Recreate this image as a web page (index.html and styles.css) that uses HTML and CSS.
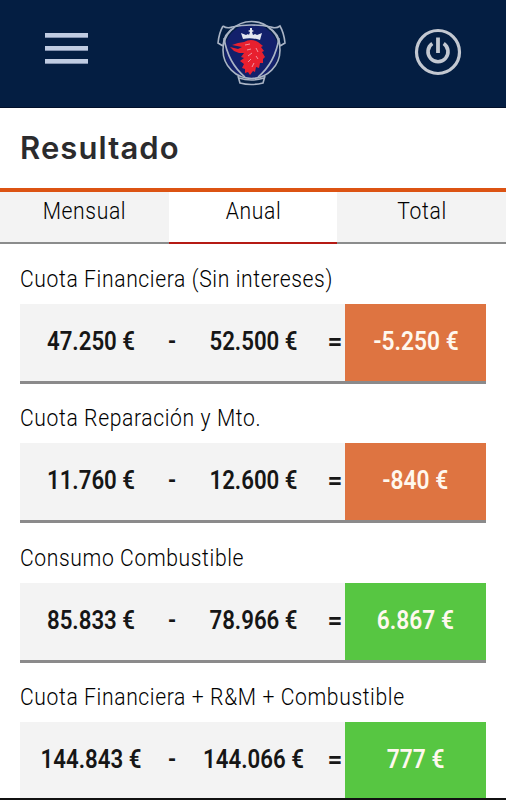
FILE: index.html
```html
<!DOCTYPE html>
<html lang="es">
<head>
    <meta charset="UTF-8">
    <meta name="viewport" content="width=device-width, initial-scale=1.0">
    <title>Resultado</title>
    <link rel="stylesheet" href="styles.css">
</head>
<body>

    <header>
        <button class="menu" aria-label="Menú">
            <span></span>
            <span></span>
            <span></span>
        </button>

        <svg class="logo" viewBox="0 0 70 68" width="70" height="68">
            <circle cx="34.500" cy="32" r="27" fill="#13206b"/>
            <g fill="none" stroke="#aab4c5" stroke-width="1.6">
                <circle cx="34.500" cy="31" r="28.500"/>
                <path d="M6 7 Q10 10 15 8 Q34 4 54 8 Q59 10 63 7 Q67 14 68 24 L63 27 M6 7 Q2 14 1 24 L6 27"/>
                <path d="M6 27 Q7 14 17 9 M63 27 Q62 14 52 9"/>
                <path d="M7 19 Q11 44 28 58 M62 19 Q58 44 41 58"/>
                <path d="M21 57 L23 64 Q34 67 46 64 L48 57 M22 59 Q34 63 47 59"/>
            </g>
            <path fill="#e4e7f0" d="M26 20 L24 14 L29 16 L31 15 L32 16 L33 13 L31 12 L33 11 L33 9 L35 9 L35 11 L37 12 L35 13 L36 16 L38 15 L40 16 L45 14 L43 21 Q34 18 26 20 Z"/>
            <path fill="#e8202f" d="M27 23 Q34 19 41 23 L46 27 L44 28 L47 32 L45 33 L48 38 L46 40 L46 44 L43 44 L42 49 L39 48 L38 53 L36 52 L33 56 L31 53 L28 54 L28 50 L25 49 L27 45 L23 42 L27 39 L24 38 L27 34 L22 34 L17 32 L13 28 L21 30 L25 28 L15 26 L21 24 Z"/>
            <path fill="none" stroke="#f0b5c0" stroke-width="0.800" d="M28 26 L33 25 M30 31 L34 30 M31 37 L35 34 M39 29 L41 33 M31 43 L34 40 M39 37 L41 40 M35 48 L37 44"/>
        </svg>

        <svg class="power" viewBox="0 0 48 48" width="48" height="48">
            <g fill="none" stroke="#c3c8d1">
                <circle cx="24" cy="24" r="21.500" stroke-width="3.200"/>
                <path stroke-width="3.600" d="M18.300 15.500 A10 10 0 1 0 29.700 15.500"/>
                <path stroke-width="3.800" d="M24 9.500 V25"/>
            </g>
        </svg>
    </header>

    <h1>Resultado</h1>

    <nav class="tabs">
        <a><span class="text">Mensual</span></a>
        <a class="active"><span class="text">Anual</span></a>
        <a><span class="text">Total</span></a>
    </nav>

    <main>
        <section>
            <h2><span class="text">Cuota Financiera (Sin intereses)</span></h2>
            <div class="row">
                <span>47.250 €</span><span>-</span><span>52.500 €</span><span class="equals">=</span>
                <div class="result negative"><span>-5.250 €</span></div>
            </div>
        </section>
        <section>
            <h2><span class="text">Cuota Reparación y Mto.</span></h2>
            <div class="row">
                <span>11.760 €</span><span>-</span><span>12.600 €</span><span class="equals">=</span>
                <div class="result negative"><span>-840 €</span></div>
            </div>
        </section>
        <section>
            <h2><span class="text">Consumo Combustible</span></h2>
            <div class="row">
                <span>85.833 €</span><span>-</span><span>78.966 €</span><span class="equals">=</span>
                <div class="result positive"><span>6.867 €</span></div>
            </div>
        </section>
        <section>
            <h2><span class="text">Cuota Financiera + R&amp;M + Combustible</span></h2>
            <div class="row">
                <span>144.843 €</span><span>-</span><span>144.066 €</span><span class="equals">=</span>
                <div class="result positive"><span>777 €</span></div>
            </div>
        </section>
    </main>

</body>
</html>
```

FILE: styles.css
```css
* {
    box-sizing: border-box;
}

body {
    margin: 0;
    height: 800px;
    overflow: hidden;
    border-bottom: 2px solid #111;
    background-color: white;
    color: #161616;
    font-family: Roboto, "Liberation Sans", sans-serif;
}

header {
    display: flex;
    justify-content: space-between;
    height: 108px;
    padding: 0 44px 0 45px;
    background-color: #041e42;
    border-bottom: 1px solid #02102a;
}

.menu {
    display: flex;
    flex-direction: column;
    gap: 8px;
    width: 43px;
    margin-top: 33px;
    padding: 0;
    border: 0;
    background: none;
}

.menu span {
    width: 43px;
    height: 5px;
    background-color: #c0cce2;
    border-bottom: 1px solid #8291ae;
}

.logo {
    margin: 19px 0 0 2px;
}

.power {
    margin: 28px 0 0;
}

h1 {
    display: flex;
    align-items: center;
    height: 80px;
    margin: 0;
    padding: 0 0 2px 20px;
    color: #2b2b2d;
    font-family: Inter, sans-serif;
    font-size: 31px;
    font-weight: 600;
    letter-spacing: 1.1px;
}

.tabs {
    display: grid;
    grid-template-columns: 1fr 1fr 1fr;
    height: 56px;
    border-top: 4px solid #dc5313;
}

.tabs a {
    padding: 5px 0 0 1px;
    background-color: #f3f3f3;
    border-bottom: 2px solid #8b8c8c;
    font-size: 24px;
    line-height: 28px;
    text-align: center;
}

.tabs .active {
    background-color: white;
    border-bottom-color: #b51a14;
}

.text {
    display: inline-block;
    color: #000;
    font-weight: 300;
    letter-spacing: 0.7px;
    transform: scaleX(0.88);
}

main {
    padding: 0 20px;
}

section {
    height: 139.3px;
    padding-top: 20px;
}

h2 {
    height: 40px;
    margin: 0;
    font-size: 24px;
    line-height: 30px;
    white-space: nowrap;
}

h2 .text {
    transform-origin: left;
}

.row {
    display: grid;
    grid-template-columns: 142px 20px 143px 20px 141px;
    height: 80px;
    background-color: #f3f3f3;
    border-bottom: 3px solid #8b8a8b;
    font-size: 25px;
    font-weight: 600;
    line-height: 76px;
    text-align: center;
}

.row span {
    transform: scaleX(0.89);
}

.row .equals {
    transform: scaleX(1.050);
}

.result {
    color: #fff8ee;
}

.result span {
    display: inline-block;
    transform: scaleX(0.91);
}

.negative {
    background-color: #de7441;
}

.positive {
    background-color: #57c642;
}
```
